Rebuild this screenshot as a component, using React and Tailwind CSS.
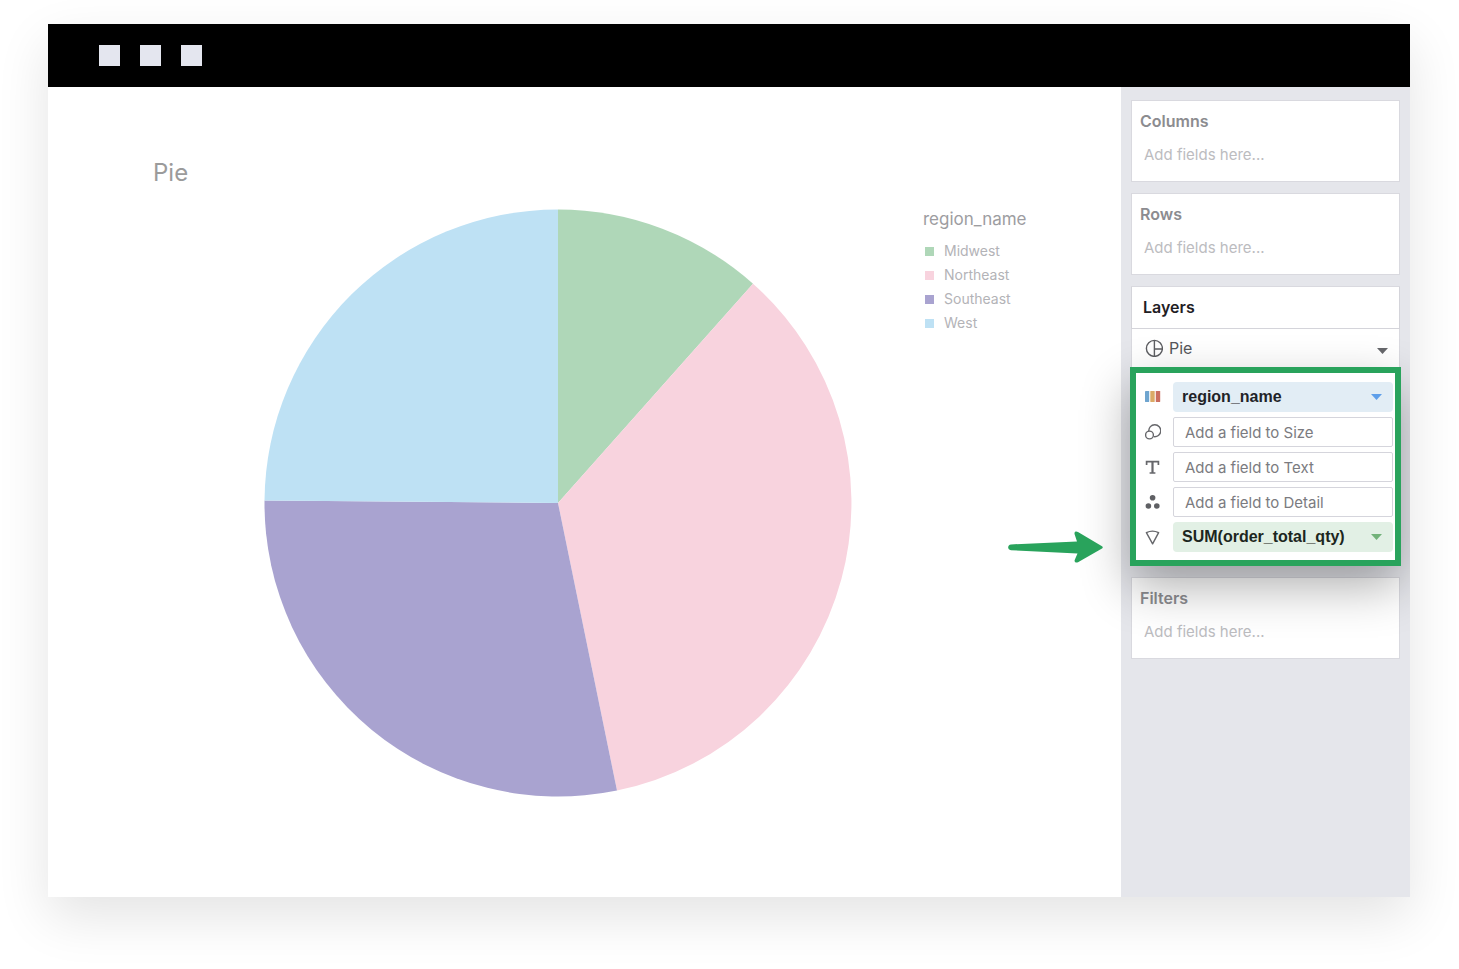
const slices = [
  { name: 'Midwest', color: '#afd7b8', path: 'M294 294V0.5A293.5 293.5 0 0 1 489 74.7Z', swatch: 'bg-[#afd7b8]' },
  { name: 'Northeast', color: '#f8d3de', path: 'M294 294L489 74.7A293.5 293.5 0 0 1 353 581.5Z', swatch: 'bg-[#f8d3de]' },
  { name: 'Southeast', color: '#a9a3d0', path: 'M294 294L353 581.5A293.5 293.5 0 0 1 0.5 291.5Z', swatch: 'bg-[#a9a3d0]' },
  { name: 'West', color: '#bee1f4', path: 'M294 294L0.5 291.5A293.5 293.5 0 0 1 294 0.5Z', swatch: 'bg-[#bee1f4]' },
];

function Caret({ className }) {
  return (
    <svg viewBox="0 0 11 6" className={`pointer-events-none absolute top-1/2 h-1.5 w-[11px] ${className}`}>
      <path d="M0 0H11L5.5 6Z" fill="currentColor" />
    </svg>
  );
}

function ColorIcon() {
  return (
    <svg viewBox="0 0 16 16" className="size-4 shrink-0">
      <rect x="0" y="2" width="4.2" height="11" rx="0.4" fill="#6fa5cf" />
      <rect x="5.3" y="2" width="4.4" height="11" rx="0.4" fill="#dbaa66" />
      <rect x="10.8" y="2" width="4.4" height="11" rx="0.4" fill="#cb6e5f" />
    </svg>
  );
}

function SizeIcon() {
  return (
    <svg viewBox="0 0 16 16" className="size-4 shrink-0" fill="none" stroke="#66676b" strokeWidth="1.4">
      <path d="M3.8 7.2A6 6 0 1 1 8.7 12.6" />
      <circle cx="4.5" cy="11" r="3.9" />
    </svg>
  );
}

function TextIcon() {
  return (
    <svg viewBox="0 0 16 16" className="size-4 shrink-0" fill="none" stroke="#66676b">
      <path d="M1.6 6V2.6H13.4V6" strokeWidth="1.7" />
      <path d="M7.5 2.6V14" strokeWidth="2.2" />
      <path d="M4.6 14H10.4" strokeWidth="1.5" />
    </svg>
  );
}

function DetailIcon() {
  return (
    <svg viewBox="0 0 16 16" className="size-4 shrink-0" fill="#5f6064">
      <circle cx="7.6" cy="3.8" r="2.8" />
      <circle cx="3.4" cy="12" r="2.8" />
      <circle cx="11.8" cy="12" r="2.8" />
    </svg>
  );
}

function AngleIcon() {
  return (
    <svg viewBox="0 0 16 16" className="size-4 shrink-0" fill="none" stroke="#66676b" strokeWidth="1.4" strokeLinejoin="round">
      <path d="M1.4 3.6Q7.5 0.6 13.6 3.6L7.6 14.8Z" />
    </svg>
  );
}

function PieIcon() {
  return (
    <svg viewBox="0 0 18 18" className="size-[18px] shrink-0" fill="none" stroke="#5d5e62" strokeWidth="1.4">
      <circle cx="9.4" cy="9.4" r="8" />
      <path d="M9.4 1.4V17.4M9.4 10H17.4" />
    </svg>
  );
}

function Shelf({ id, title }) {
  return (
    <section className="h-[82px] border border-[#d9d9df] bg-white pt-2 pl-2">
      <label htmlFor={id} className="block text-base leading-6 font-semibold text-[#8c8c90]">
        {title}
      </label>
      <input
        id={id}
        placeholder="Add fields here..."
        className="mt-[9px] block h-6 w-full bg-transparent pl-1 text-[15px] outline-none placeholder:text-[#bcbcbf]"
      />
    </section>
  );
}

function EmptyField({ icon, label }) {
  return (
    <div className="flex items-center gap-3">
      {icon}
      <input
        aria-label={label}
        placeholder={label}
        className="h-[30px] min-w-0 flex-1 rounded-xs border border-[#d5d5dc] bg-white px-[11px] text-[15px] outline-none placeholder:text-[#7b7b80]"
      />
    </div>
  );
}

function FieldPill({ icon, label, value, pill, caret }) {
  return (
    <div className="flex items-center gap-3">
      {icon}
      <div className="relative min-w-0 flex-1">
        <select
          aria-label={label}
          className={`block h-[30px] w-full appearance-none rounded-sm pr-6 pl-[9px] font-['Liberation_Sans',sans-serif] text-base font-bold outline-none ${pill}`}
        >
          <option>{value}</option>
        </select>
        <Caret className={`right-[11px] -translate-y-1/2 ${caret}`} />
      </div>
    </div>
  );
}

function Chart() {
  return (
    <main className="min-w-0 flex-1 bg-white pt-[70px] pb-[100px] pl-[105px]">
      <h1 className="text-2xl leading-8 text-[#9b9b9b]">Pie</h1>
      <div className="mt-5 flex items-start gap-[71px] pl-[111px]">
        <svg viewBox="0 0 588 588" className="size-[588px] shrink-0" role="img" aria-label="Pie chart by region_name">
          {slices.map((s) => (
            <path key={s.name} d={s.path} fill={s.color} />
          ))}
        </svg>
        <div className="-mt-0.5">
          <h2 className="text-[17px] leading-6 text-[#9d9da1]">region_name</h2>
          <ul className="mt-2">
            {slices.map((s) => (
              <li key={s.name} className="flex h-6 items-center gap-2.5 pl-0.5 text-sm text-[#b3b3b7]">
                <span className={`size-[9px] ${s.swatch}`} />
                {s.name}
              </li>
            ))}
          </ul>
        </div>
      </div>
    </main>
  );
}

function Layers() {
  return (
    <section className="border-t border-[#d9d9df] bg-white">
      <h2 className="h-[42px] border-x border-b border-[#d4d4da] pl-[11px] text-base leading-[41px] font-semibold text-[#1f2024]">
        Layers
      </h2>
      <div className="relative flex h-[38px] items-center border-x border-[#d9d9df] pl-[13px]">
        <PieIcon />
        <select aria-label="Layer type" className="h-8 flex-1 appearance-none bg-transparent pl-1.5 text-base text-[#56575b] outline-none">
          <option>Pie</option>
        </select>
        <Caret className="right-[11px] text-[#66676b]" />
      </div>
      <div className="relative z-10 -mx-px flex flex-col gap-[5px] border-6 border-[#29a35c] bg-white pt-[9px] pr-0.5 pb-2 pl-[9px] shadow-[0_20px_46px_rgba(0,0,0,0.32)]">
        <FieldPill icon={<ColorIcon />} label="Color" value="region_name" pill="bg-[#e2edf5] text-[#1f2328]" caret="text-[#5e9fea]" />
        <EmptyField icon={<SizeIcon />} label="Add a field to Size" />
        <EmptyField icon={<TextIcon />} label="Add a field to Text" />
        <EmptyField icon={<DetailIcon />} label="Add a field to Detail" />
        <FieldPill icon={<AngleIcon />} label="Angle" value="SUM(order_total_qty)" pill="bg-[#e2f0e5] text-[#1c2620]" caret="text-[#72b27a]" />
        <svg viewBox="0 0 96 34" className="absolute right-full bottom-[-4px] mr-[33px] h-[34px] w-24" fill="#29a35c">
          <path d="M4 14.4L70 11.4L67.6 4.2C67 1.600 69 0.800 71 2L95 16.200Q96.500 17.400 95 18.500L71 32.200C69 33.200 67 32.200 67.700 30L70.500 23.400L4 20.200C0.200 19.800 0.200 14.800 4 14.400Z" />
        </svg>
      </div>
    </section>
  );
}

export default function App() {
  return (
    <div className="overflow-hidden bg-white pt-6 pr-[49px] pb-[72px] pl-12 font-['Inter',sans-serif]">
      <div className="shadow-[0_20px_50px_rgba(0,0,0,0.11)]">
        <header className="flex h-[63px] items-center gap-5 bg-black pl-[51px]">
          <span className="size-[21px] bg-[#e4e6ef]" />
          <span className="size-[21px] bg-[#e4e6ef]" />
          <span className="size-[21px] bg-[#e4e6ef]" />
        </header>
        <div className="flex overflow-hidden">
          <Chart />
          <aside className="flex w-[289px] shrink-0 flex-col gap-[11px] bg-[#e5e6eb] px-2.5 pt-[13px]">
            <Shelf id="columns" title="Columns" />
            <Shelf id="rows" title="Rows" />
            <Layers />
            <Shelf id="filters" title="Filters" />
          </aside>
        </div>
      </div>
    </div>
  );
}
